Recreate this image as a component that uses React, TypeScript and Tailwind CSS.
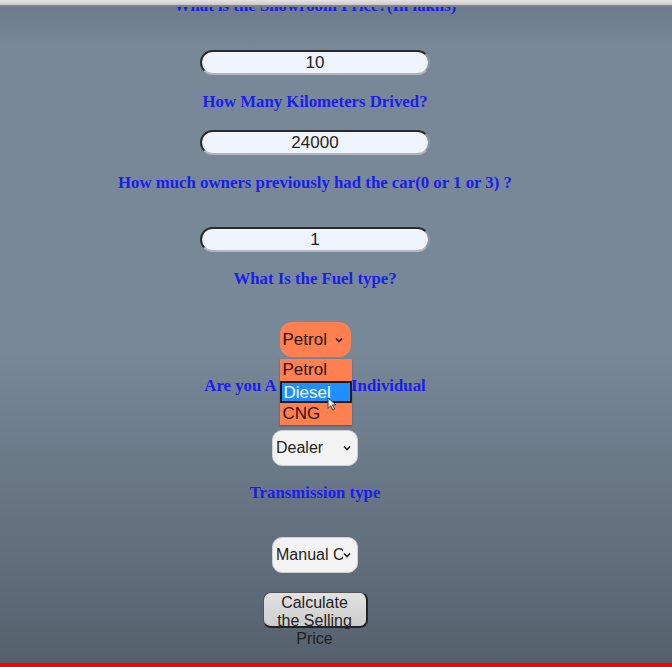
import React from "react";

const label =
  "h-[20px] leading-[20px] text-[16.8px] font-bold text-[#1c1cf0] text-center whitespace-nowrap [font-family:'Liberation_Serif',serif]";
const field =
  "w-[230px] h-[25px] rounded-full bg-[#eef3fc] border-2 border-t-[#2a2a2a] border-l-[#2a2a2a] border-r-[#8f959d] border-b-[#b3b7bd] flex items-center justify-center text-[17px] text-[#222]";

function Chevron({ className = "" }: { className?: string }) {
  return (
    <svg width="8" height="6" viewBox="0 0 8 6" className={className}>
      <path d="M1 1.5 L4 4.5 L7 1.5" fill="none" stroke="#222" strokeWidth="1.6" />
    </svg>
  );
}

function GraySelect({ text, clip }: { text: string; clip?: boolean }) {
  return (
    <div className="w-[86px] h-[36px] rounded-[10px] bg-[#f3f3f3] border border-[#cfcfcf] flex items-center pl-[3px] pr-[6px] text-[16px] text-[#222]">
      <span className={clip ? "flex-1 overflow-hidden whitespace-nowrap" : "flex-1"}>{text}</span>
      <Chevron />
    </div>
  );
}

export default function App() {
  return (
    <div className="relative h-[667px] overflow-hidden flex flex-col bg-[linear-gradient(to_bottom,#6b7888_0%,#778899_7%,#778899_52%,#55606c_100%)] [font-family:'Liberation_Sans',Arial,sans-serif]">
      <div className="absolute top-0 left-0 right-0 h-[7px] bg-[linear-gradient(to_bottom,#e4e4e4,#c9c9c9)] border-b-2 border-[#7d838b] z-10" />

      <div className="flex-1 flex flex-col items-center pr-[42px]">
        <div className={`${label} mt-[-4px]`}>What is the Showroom Price?(In lakhs)</div>
        <div className={`${field} mt-[34px]`}>10</div>

        <div className={`${label} mt-[17px]`}>How Many Kilometers Drived?</div>
        <div className={`${field} mt-[18px]`}>24000</div>

        <div className={`${label} mt-[18px]`}>How much owners previously had the car(0 or 1 or 3) ?</div>
        <div className={`${field} mt-[34px]`}>1</div>

        <div className={`${label} mt-[17px]`}>What Is the Fuel type?</div>

        <div className="relative mt-[33px]">
          <div className="w-[71px] h-[35px] rounded-[12px] bg-[#ff7f50] flex items-center pl-[3px] pr-[8px] text-[17px] text-[#2a1408]">
            <span className="flex-1">Petrol</span>
            <Chevron />
          </div>
          <div className="absolute left-0 top-[37px] w-[72px] bg-[#ff7f50] text-[17px] text-[#2a1408] z-10 shadow-[0_1px_2px_rgba(0,0,0,0.3)]">
            <div className="h-[22px] leading-[22px] pl-[3px]">Petrol</div>
            <div className="relative h-[22px] leading-[20px] pl-[2px] bg-[#1e8fff] border-2 border-[#1a1a1a] text-white">
              Diesel
              <svg width="10" height="14" viewBox="0 0 11 16" className="absolute left-[45px] top-[14px]">
                <path d="M1 1 L1 13 L4 10 L6.5 15 L8.5 14 L6 9 L10 9 Z" fill="#eee" stroke="#333" strokeWidth="1" />
              </svg>
            </div>
            <div className="h-[22px] leading-[22px] pl-[3px]">CNG</div>
          </div>
        </div>

        <div className={`${label} mt-[19px]`}>Are you A Dealer or Individual</div>
        <div className="mt-[34px]">
          <GraySelect text="Dealer" />
        </div>

        <div className={`${label} mt-[17px]`}>Transmission type</div>
        <div className="mt-[34px]">
          <GraySelect text="Manual C" clip />
        </div>

        <button className="mt-[19px] w-[105px] h-[36px] rounded-[8px] bg-[linear-gradient(to_bottom,#e2e2e2,#cdcdcd)] border border-[#555] border-r-2 border-b-2 border-r-[#222] border-b-[#222] text-[16px] leading-[18px] text-[#222] flex flex-col items-center justify-start pt-[1px] overflow-visible">
          <span>Calculate</span>
          <span>the Selling</span>
          <span>Price</span>
        </button>
      </div>

      <div className="h-[4px] bg-[#ff0000]" />
    </div>
  );
}
